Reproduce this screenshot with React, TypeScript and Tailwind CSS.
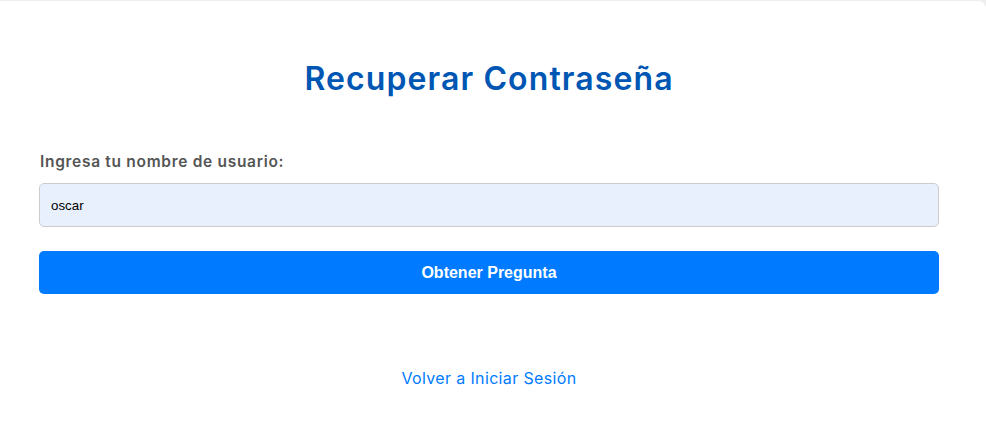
import React from "react";

export default function App() {
  return (
    <div className="min-h-[426px] w-full overflow-hidden bg-[#eeeeee] pt-px">
      <div className="ml-[-8px] min-h-[425px] w-[994px] rounded-tr-lg bg-white px-[47px]">
        <div className="flex w-[900px] flex-col font-[Inter,'Noto_Sans',sans-serif]">
          <h1 className="mt-[58px] h-[40px] text-center text-[32px] font-semibold leading-[40px] tracking-[1.1px] text-[#0056b3]">
            Recuperar Contraseña
          </h1>
          <label className="mt-[53px] h-[20px] pl-px text-[15.5px] font-semibold leading-[20px] tracking-[0.7px] text-[#555555]">
            Ingresa tu nombre de usuario:
          </label>
          <input
            defaultValue="oscar"
            className="mt-[11px] h-[44px] w-[900px] rounded-[5px] border border-[#cccccc] bg-[#e8f0fe] px-[11px] font-['Liberation_Sans',Arial,sans-serif] text-[13.33px] text-black outline-none"
          />
          <button className="mt-[24px] h-[43px] w-[900px] rounded-[5px] bg-[#007bff] font-['Liberation_Sans',Arial,sans-serif] text-[16px] font-bold text-white">
            Obtener Pregunta
          </button>
          <a
            href="#"
            className="mt-[72px] block text-center text-[16px] leading-[24px] tracking-[0.35px] text-[#007bff]"
          >
            Volver a Iniciar Sesión
          </a>
        </div>
      </div>
    </div>
  );
}
